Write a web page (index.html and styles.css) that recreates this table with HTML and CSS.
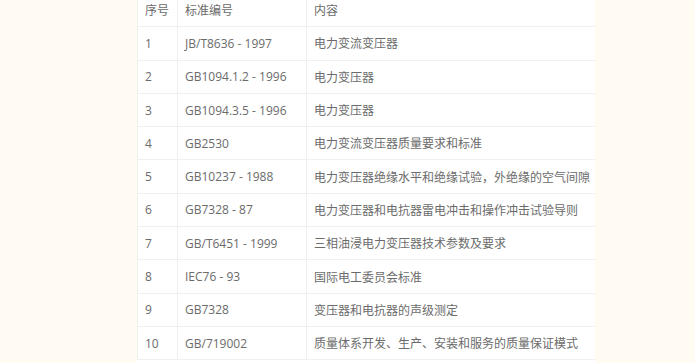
FILE: index.html
```html
<!DOCTYPE html>
<html lang="zh">
<head>
<meta charset="utf-8">
<link rel="stylesheet" href="styles.css">
</head>
<body>
<div class="page">
  <div class="content">
    <table class="std">
      <colgroup><col class="c1"><col class="c2"><col class="c3"></colgroup>
      <thead>
        <tr><th>序号</th><th>标准编号</th><th>内容</th></tr>
      </thead>
      <tbody>
        <tr><td>1</td><td>JB/T8636 - 1997</td><td>电力变流变压器</td></tr>
        <tr><td>2</td><td>GB1094.1.2 - 1996</td><td>电力变压器</td></tr>
        <tr><td>3</td><td>GB1094.3.5 - 1996</td><td>电力变压器</td></tr>
        <tr><td>4</td><td>GB2530</td><td>电力变流变压器质量要求和标准</td></tr>
        <tr><td>5</td><td>GB10237 - 1988</td><td>电力变压器绝缘水平和绝缘试验，外绝缘的空气间隙</td></tr>
        <tr><td>6</td><td>GB7328 - 87</td><td>电力变压器和电抗器雷电冲击和操作冲击试验导则</td></tr>
        <tr><td>7</td><td>GB/T6451 - 1999</td><td>三相油浸电力变压器技术参数及要求</td></tr>
        <tr><td>8</td><td>IEC76 - 93</td><td>国际电工委员会标准</td></tr>
        <tr><td>9</td><td>GB7328</td><td>变压器和电抗器的声级测定</td></tr>
        <tr><td>10</td><td>GB/719002</td><td>质量体系开发、生产、安装和服务的质量保证模式</td></tr>
      </tbody>
    </table>
  </div>
</div>
</body>
</html>
```

FILE: styles.css
```css
html, body {
  margin: 0;
  padding: 0;
  background: #fffaf2;
  height: 100%;
  overflow: hidden;
}
.page {
  display: flex;
  justify-content: flex-start;
  padding-left: 137px;
  height: 100vh;
  overflow: hidden;
}
.content {
  width: 458px;
  background: #ffffff;
  height: 100%;
  overflow: hidden;
}
.std {
  border-collapse: collapse;
  width: 458px;
  table-layout: fixed;
  margin-top: -7px;
  font-family: "Open Sans", "Noto Sans CJK SC", sans-serif;
  font-size: 12px;
  color: #6b6b6b;
}
.c1 { width: 40px; }
.c2 { width: 129px; }
.c3 { width: 289px; }
.std th, .std td {
  border: 1px solid #f0f0f0;
  height: 33.3px;
  box-sizing: border-box;
  padding: 0 0 0 7px;
  text-align: left;
  font-weight: normal;
  white-space: nowrap;
  overflow: hidden;
  vertical-align: middle;
}
.std th {
  color: #6b6b6b;
}
```
